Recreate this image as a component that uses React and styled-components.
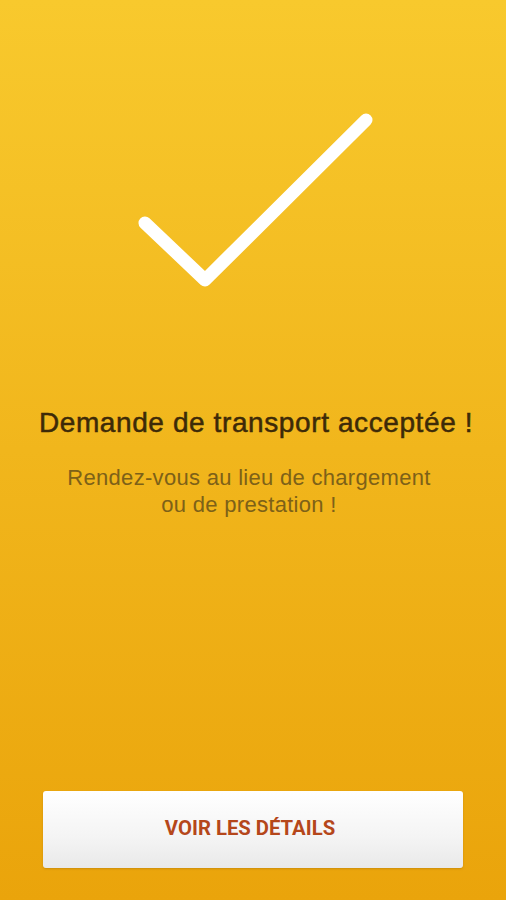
import React from 'react';
import styled, { createGlobalStyle } from 'styled-components';

const GlobalStyle = createGlobalStyle`
  html, body {
    margin: 0;
    padding: 0;
  }
  body {
    font-family: 'Liberation Sans', Arial, sans-serif;
  }
`;

const Screen = styled.div`
  width: 506px;
  height: 900px;
  box-sizing: border-box;
  display: flex;
  flex-direction: column;
  align-items: center;
  background: linear-gradient(to bottom, #f8c92d 0%, #f1b61c 50%, #eaa40b 100%);
  overflow: hidden;
`;

const CheckWrapper = styled.div`
  margin-top: 110px;
  height: 180px;
  display: flex;
  justify-content: center;
`;

const Title = styled.h1`
  margin: 117px 0 0;
  padding-left: 6px;
  font-family: 'Liberation Sans', Arial, sans-serif;
  font-size: 28px;
  line-height: 32px;
  font-weight: normal;
  letter-spacing: 0.6px;
  color: #3d2a08;
  -webkit-text-stroke: 0.5px #3d2a08;
  text-align: center;
  white-space: nowrap;
`;

const Subtitle = styled.p`
  margin: 25px 0 0;
  padding-right: 8px;
  font-family: 'Liberation Sans', Arial, sans-serif;
  font-size: 22px;
  line-height: 27px;
  letter-spacing: 0.3px;
  color: #7d6118;
  text-align: center;
`;

const Spacer = styled.div`
  flex: 1;
`;

const DetailsButton = styled.button`
  width: 420px;
  height: 77px;
  margin-bottom: 32px;
  padding: 0 6px 4px 0;
  border: none;
  border-radius: 3px;
  background: linear-gradient(to bottom, #ffffff 0%, #f4f4f4 60%, #e9e9e9 100%);
  box-shadow: 0 1px 2px rgba(120, 70, 0, 0.25);
  font-family: Roboto, 'Liberation Sans', sans-serif;
  font-weight: 700;
  font-size: 20.3px;
  color: #b5471b;
  cursor: pointer;
`;

const CheckIcon = () => (
  <svg width="260" height="190" viewBox="0 0 260 190">
    <polyline
      points="22,113 82,170 243,10"
      fill="none"
      stroke="#ffffff"
      strokeWidth="13"
      strokeLinecap="round"
      strokeLinejoin="round"
    />
  </svg>
);

const App = () => (
  <Screen>
    <GlobalStyle />
    <CheckWrapper>
      <CheckIcon />
    </CheckWrapper>
    <Title>Demande de transport acceptée !</Title>
    <Subtitle>
      Rendez-vous au lieu de chargement
      <br />
      ou de prestation !
    </Subtitle>
    <Spacer />
    <DetailsButton>VOIR LES DÉTAILS</DetailsButton>
  </Screen>
);

export default App;
